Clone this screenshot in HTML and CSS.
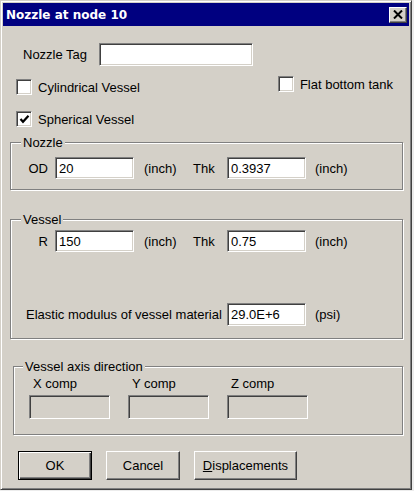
FILE: index.html
```html
<!DOCTYPE html>
<html lang="en">
<head>
  <meta charset="UTF-8" />
  <title>Nozzle at node 10</title>
  <link rel="stylesheet" href="styles.css">
</head>
<body>

  <div class="window">
    <!-- Title bar -->
    <div class="titlebar">
      <span class="title">Nozzle at node 10</span>
      <button class="close-btn" aria-label="Close">
        <svg width="10" height="9" viewBox="0 0 10 9">
          <path d="M1 0.5 L9 8.5 M9 0.5 L1 8.5" stroke="#000" stroke-width="2" fill="none"/>
        </svg>
      </button>
    </div>

    <div class="dialog">
      <div class="tag-row">
        <label class="tag-label">Nozzle Tag</label>
        <input type="text" class="field tag-field" value="">
      </div>

      <div class="check-row first">
        <label class="check cyl">
          <span class="box"></span>
          <span>Cylindrical Vessel</span>
        </label>
        <label class="check flat">
          <span class="box"></span>
          <span>Flat bottom tank</span>
        </label>
      </div>

      <div class="check-row second">
        <label class="check">
          <span class="box">
            <svg width="11" height="11" viewBox="0 0 11 11">
              <path d="M1.5 5 L4 7.8 L9.5 1.8" stroke="#000" stroke-width="2.2" fill="none"/>
            </svg>
          </span>
          <span>Spherical Vessel</span>
        </label>
      </div>

      <!-- Nozzle -->
      <fieldset class="group nozzle">
        <legend>Nozzle</legend>
        <div class="dim-row">
          <span class="lbl">OD</span>
          <input type="text" class="field" value="20">
          <span class="unit">(inch)</span>
          <span class="lbl2">Thk</span>
          <input type="text" class="field" value="0.3937">
          <span class="unit">(inch)</span>
        </div>
      </fieldset>

      <!-- Vessel -->
      <fieldset class="group vessel">
        <legend>Vessel</legend>
        <div class="dim-row">
          <span class="lbl">R</span>
          <input type="text" class="field" value="150">
          <span class="unit">(inch)</span>
          <span class="lbl2">Thk</span>
          <input type="text" class="field" value="0.75">
          <span class="unit">(inch)</span>
        </div>
        <div class="modulus-row">
          <span class="modulus-label">Elastic modulus of vessel material</span>
          <input type="text" class="field" value="29.0E+6">
          <span class="unit">(psi)</span>
        </div>
      </fieldset>

      <!-- Vessel axis direction -->
      <fieldset class="group axis">
        <legend>Vessel axis direction</legend>
        <div class="axis-row">
          <div class="axis-col">
            <span>X comp</span>
            <input type="text" class="field disabled" disabled>
          </div>
          <div class="axis-col">
            <span>Y comp</span>
            <input type="text" class="field disabled" disabled>
          </div>
          <div class="axis-col">
            <span>Z comp</span>
            <input type="text" class="field disabled" disabled>
          </div>
        </div>
      </fieldset>

      <div class="button-row">
        <button class="btn default">OK</button>
        <button class="btn">Cancel</button>
        <button class="btn wide"><u>D</u>isplacements</button>
      </div>
    </div>
  </div>

</body>
</html>
```

FILE: styles.css
```css
body {
  margin: 0;
  background-color: #ececec;
  font-family: "Liberation Sans", Arial, sans-serif;
  font-size: 13px;
  color: #000;
}

.window {
  width: 406px;
  height: 484px;
  padding: 2px;
  background-color: #d4d0c8;
  border: 1px solid;
  border-color: #d4d0c8 #404040 #404040 #d4d0c8;
  box-shadow: inset 1px 1px #fff, inset -1px -1px #808080;
}

/* Title bar */
.titlebar {
  height: 23px;
  background-color: #000080;
  display: flex;
  align-items: center;
  justify-content: space-between;
}

.title {
  font-family: "DejaVu Sans", sans-serif;
  font-weight: bold;
  font-size: 12px;
  color: #fff;
  padding-left: 3px;
}

.close-btn {
  width: 18px;
  height: 16px;
  margin-right: 2px;
  padding: 0;
  display: flex;
  align-items: center;
  justify-content: center;
  background-color: #d4d0c8;
  border: 1px solid;
  border-color: #fff #404040 #404040 #fff;
  box-shadow: inset -1px -1px #808080;
}

/* Generic sunken text field */
.field {
  box-sizing: border-box;
  width: 79px;
  height: 22px;
  padding: 0 3px;
  font: inherit;
  color: #000;
  background-color: #fff;
  border: 1px solid;
  border-color: #808080 #fff #fff #808080;
  box-shadow: inset 1px 1px #404040, inset -1px -1px #d4d0c8;
  outline: none;
}

.field.disabled {
  background-color: #d4d0c8;
  width: 81px;
  height: 24px;
}

/* Nozzle tag */
.tag-row {
  display: flex;
  align-items: center;
  margin-top: 17px;
  padding-left: 20px;
}

.tag-label {
  width: 76px;
}

.tag-field {
  width: 154px;
  height: 23px;
}

/* Checkboxes */
.check-row {
  display: flex;
  align-items: flex-start;
}

.check-row.first {
  margin-top: 10px;
  height: 18px;
}

.check-row.second {
  margin-top: 17px;
}

.check {
  display: flex;
  align-items: center;
  gap: 6px;
}

.check.cyl {
  margin-left: 13px;
  margin-top: 3px;
}

.check.flat {
  margin-left: 138px;
}

.check-row.second .check {
  margin-left: 13px;
}

.box {
  box-sizing: border-box;
  width: 16px;
  height: 16px;
  background-color: #fff;
  border: 1px solid;
  border-color: #808080 #fff #fff #808080;
  box-shadow: inset 1px 1px #404040, inset -1px -1px #d4d0c8;
  display: flex;
  align-items: center;
  justify-content: center;
}

/* Group boxes */
.group {
  margin: 0 0 0 7px;
  padding: 0;
  min-width: 0;
  width: 391px;
  border: 1px solid #808080;
  box-shadow: inset 1px 1px #fff, 1px 1px #fff;
}

.group legend {
  margin-left: 10px;
  padding: 0 2px;
  line-height: 15px;
  background-color: #d4d0c8;
}

.nozzle {
  margin-top: 8px;
  padding: 7px 0 10px;
}

.vessel {
  margin-top: 22px;
  padding: 3px 0 12px;
}

.axis {
  margin-top: 20px;
  margin-left: 10px;
  width: 388px;
  padding: 2px 0 15px;
}

.axis legend {
  margin-left: 9px;
}

.dim-row,
.modulus-row {
  display: flex;
  align-items: center;
}

.lbl {
  box-sizing: border-box;
  width: 44px;
  padding-right: 7px;
  text-align: right;
}

.unit {
  margin-left: 10px;
  width: 49px;
}

.lbl2 {
  width: 34px;
}

.dim-row .unit:last-child {
  margin-left: 9px;
}

.modulus-row {
  margin-top: 51px;
}

.modulus-row .field {
  height: 23px;
}

.modulus-label {
  box-sizing: border-box;
  width: 216px;
  padding-left: 15px;
}

.modulus-row .unit {
  margin-left: 9px;
}

/* Axis components */
.axis-row {
  display: flex;
  gap: 18px;
  padding-left: 15px;
}

.axis-col {
  display: flex;
  flex-direction: column;
  gap: 4px;
  line-height: 15px;
}

.axis-col span {
  padding-left: 4px;
}

/* Buttons */
.button-row {
  display: flex;
  gap: 14px;
  margin-top: 16px;
  padding-left: 15px;
}

.btn {
  box-sizing: border-box;
  width: 74px;
  height: 29px;
  padding: 0;
  font: inherit;
  color: #000;
  background-color: #d4d0c8;
  border: 1px solid;
  border-color: #fff #404040 #404040 #fff;
  box-shadow: inset -1px -1px #808080, inset 1px 1px #d4d0c8;
}

.btn.default {
  border-color: #000;
  box-shadow: inset 1px 1px #fff, inset -1px -1px #404040, inset -2px -2px #808080;
}

.btn.wide {
  width: 103px;
}
```
